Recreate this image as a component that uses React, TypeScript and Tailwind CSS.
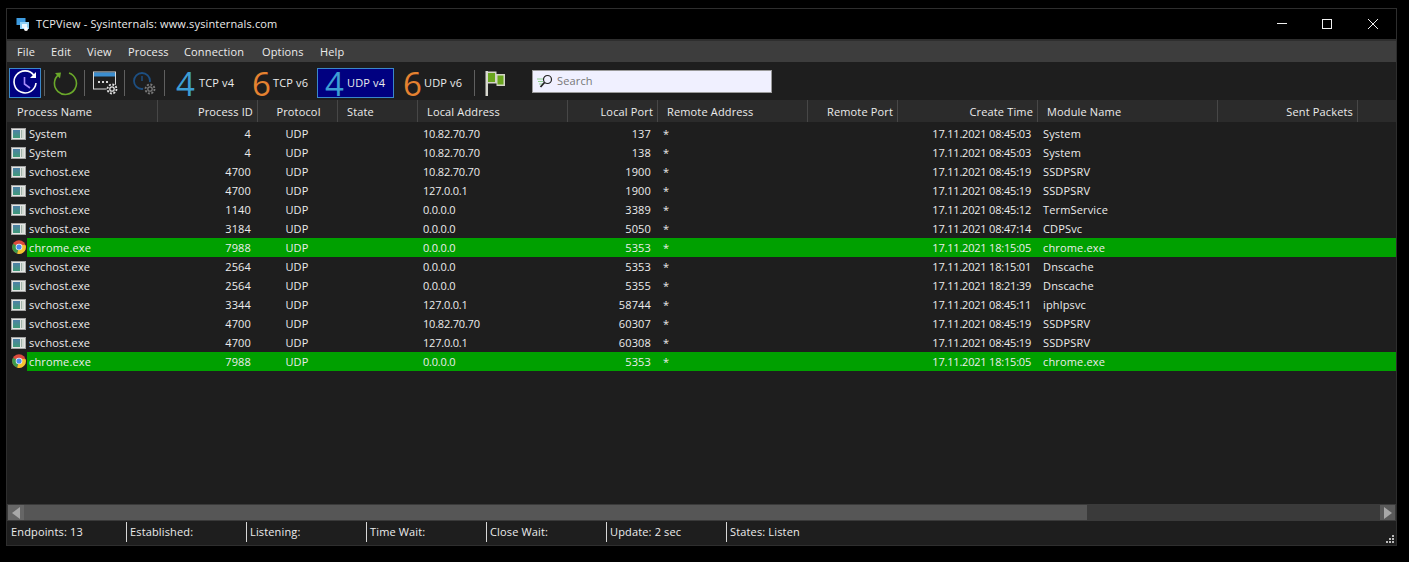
const COLS = [
  { label: "Process Name", w: "w-[150px]", head: "pl-[9px] text-left", cell: "pl-[22px] text-left" },
  { label: "Process ID", w: "w-[100px]", head: "pr-[4px] text-right", cell: "pr-[6px] text-right" },
  { label: "Protocol", w: "w-[80px]", head: "pl-[2px] text-center", cell: "text-center" },
  { label: "State", w: "w-[80px]", head: "pl-[9px] text-left", cell: "pl-[6px] text-left" },
  { label: "Local Address", w: "w-[150px]", head: "pl-[9px] text-left", cell: "pl-[6px] text-left tracking-[-0.2px]" },
  { label: "Local Port", w: "w-[90px]", head: "pr-[4px] text-right", cell: "pr-[6px] text-right" },
  { label: "Remote Address", w: "w-[150px]", head: "pl-[9px] text-left", cell: "pl-[6px] text-left" },
  { label: "Remote Port", w: "w-[90px]", head: "pr-[4px] text-right", cell: "pr-[6px] text-right" },
  { label: "Create Time", w: "w-[140px]", head: "pr-[4px] text-right", cell: "pr-[6px] text-right tracking-[-0.2px]" },
  { label: "Module Name", w: "w-[180px]", head: "pl-[9px] text-left", cell: "pl-[6px] text-left" },
  { label: "Sent Packets", w: "w-[140px]", head: "pr-[4px] text-right", cell: "pr-[6px] text-right" },
];

const ROWS = [
  ["System", "4", "10.82.70.70", "137", "17.11.2021 08:45:03", "System"],
  ["System", "4", "10.82.70.70", "138", "17.11.2021 08:45:03", "System"],
  ["svchost.exe", "4700", "10.82.70.70", "1900", "17.11.2021 08:45:19", "SSDPSRV"],
  ["svchost.exe", "4700", "127.0.0.1", "1900", "17.11.2021 08:45:19", "SSDPSRV"],
  ["svchost.exe", "1140", "0.0.0.0", "3389", "17.11.2021 08:45:12", "TermService"],
  ["svchost.exe", "3184", "0.0.0.0", "5050", "17.11.2021 08:47:14", "CDPSvc"],
  ["chrome.exe", "7988", "0.0.0.0", "5353", "17.11.2021 18:15:05", "chrome.exe"],
  ["svchost.exe", "2564", "0.0.0.0", "5353", "17.11.2021 18:15:01", "Dnscache"],
  ["svchost.exe", "2564", "0.0.0.0", "5355", "17.11.2021 18:21:39", "Dnscache"],
  ["svchost.exe", "3344", "127.0.0.1", "58744", "17.11.2021 08:45:11", "iphlpsvc"],
  ["svchost.exe", "4700", "10.82.70.70", "60307", "17.11.2021 08:45:19", "SSDPSRV"],
  ["svchost.exe", "4700", "127.0.0.1", "60308", "17.11.2021 08:45:19", "SSDPSRV"],
  ["chrome.exe", "7988", "0.0.0.0", "5353", "17.11.2021 18:15:05", "chrome.exe"],
];

const MENU = [
  { label: "File", w: "w-[34px]" },
  { label: "Edit", w: "w-[36px]" },
  { label: "View", w: "w-[41px]" },
  { label: "Process", w: "w-[56px]" },
  { label: "Connection", w: "w-[78px]" },
  { label: "Options", w: "w-[58px]" },
  { label: "Help", w: "w-[40px]" },
];

const STATUS = ["Endpoints: 13", "Established:", "Listening:", "Time Wait:", "Close Wait:", "Update: 2 sec"];

function AppIcon() {
  return (
    <svg width="15" height="12" viewBox="0 0 15 12" className="shrink-0">
      <defs>
        <linearGradient id="appfill" x1="0" y1="0" x2="0" y2="1">
          <stop offset="0" stopColor="#4f7fa8" />
          <stop offset="1" stopColor="#3f9a78" />
        </linearGradient>
      </defs>
      <rect x="0.5" y="0.5" width="14" height="11" fill="#e4e6e4" stroke="#a4a4a4" />
      <rect x="2" y="2" width="7" height="8" fill="url(#appfill)" />
      <rect x="10" y="2" width="1" height="8" fill="#9fb2a8" />
      <rect x="11" y="2" width="2" height="8" fill="#d2d8d2" />
    </svg>
  );
}

function ChromeIcon() {
  return (
    <svg width="14" height="14" viewBox="0 0 16 16" className="shrink-0">
      <circle cx="8" cy="8" r="7.8" fill="#dd4b3e" />
      <path d="M8 8 L1.2 4.2 A7.8 7.8 0 0 0 6 15.6 Z" fill="#3b9a4b" />
      <path d="M8 8 L6 15.6 A7.8 7.8 0 0 0 15.6 6 L8 5 Z" fill="#f4c430" />
      <circle cx="8" cy="8" r="3.8" fill="#f2f2f2" />
      <circle cx="8" cy="8" r="2.9" fill="#4a8af0" />
    </svg>
  );
}

function TitleIcon() {
  return (
    <svg width="15" height="15" viewBox="0 0 15 15" className="shrink-0">
      <rect x="0.500" y="1" width="9" height="7" fill="#3d9be0" />
      <rect x="4" y="5" width="9" height="7" fill="#8fd0f5" />
      <rect x="6" y="7" width="5" height="4" fill="#e9f6ff" />
      <circle cx="10" cy="12" r="2" fill="#ffffff" />
    </svg>
  );
}

function WindowButtons() {
  return (
    <svg width="101" height="10" viewBox="0 0 101 10" fill="none" className="mr-[18px] shrink-0" stroke="#f0f0f0">
      <path d="M0 4.500 H10" />
      <rect x="45.500" y="0.500" width="9" height="9" />
      <path d="M91 0 L101 10 M101 0 L91 10" />
    </svg>
  );
}

function ClockRefresh() {
  return (
    <svg width="30" height="28" viewBox="0 0 30 28" fill="none">
      <path d="M24 6.500 A11 11 0 1 0 26 14" stroke="#ffffff" strokeWidth="1.6" />
      <path d="M26 3 V9 H20" fill="#ffffff" />
      <path d="M14.500 8 V15 L20 19" stroke="#a78bfa" strokeWidth="1.6" />
    </svg>
  );
}

function RefreshGreen() {
  return (
    <svg width="26" height="26" viewBox="0 0 26 26" fill="none">
      <path d="M7 4.500 A11 11 0 1 0 17 3" stroke="#6aa82a" strokeWidth="1.600" />
      <path d="M3 3 L9 2.500 L8 8.500 Z" fill="#6aa82a" />
    </svg>
  );
}

function Gear({ x, y, color }: { x: number; y: number; color: string }) {
  return (
    <g transform={`translate(${x} ${y})`} stroke={color} fill="none">
      <circle r="2.2" strokeWidth="1.3" />
      <circle r="4.5" strokeWidth="1.8" strokeDasharray="2 1.5" />
    </g>
  );
}

function WindowGear() {
  return (
    <svg width="25" height="24" viewBox="0 0 25 24" fill="none">
      <rect x="0.500" y="1" width="22" height="17" fill="#1f1f1f" stroke="#d8d8d8" />
      <rect x="1" y="1.500" width="21" height="4" fill="#3b8ed0" />
      <path d="M5 11h2M9 11h2M13 11h2" stroke="#d8d8d8" strokeWidth="2" />
      <circle cx="19" cy="18" r="5.500" fill="#1f1f1f" />
      <Gear x={19} y={18} color="#e0e0e0" />
    </svg>
  );
}

function ClockGear() {
  return (
    <svg width="25" height="27" viewBox="0 0 25 27" fill="none">
      <circle cx="9" cy="11" r="8" stroke="#1d4f82" strokeWidth="1.8" />
      <path d="M9 6 V11" stroke="#1d4f82" strokeWidth="1.4" />
      <circle cx="17" cy="19" r="7" fill="#1f1f1f" />
      <Gear x={17} y={19} color="#7a7a7a" />
    </svg>
  );
}

function Flag() {
  return (
    <svg width="20" height="25" viewBox="0 0 20 25">
      <path d="M0.500 0 H3 V25 H0.500 Z" fill="#d8d8d0" />
      <path d="M3 0.500 H11.500 V3 H20 V15 H11.500 V12.500 H3 Z" fill="#d4d4c8" />
      <rect x="3" y="2" width="7" height="9" fill="#6aa51e" />
      <rect x="12.500" y="4.500" width="6" height="9" fill="#6aa51e" />
    </svg>
  );
}

function SearchGlyph() {
  return (
    <svg width="20" height="15" viewBox="0 0 20 15" fill="none" className="shrink-0">
      <path d="M1 5h6M2 7.500h5M3 10h4" stroke="#8fd08f" strokeWidth="1" />
      <circle cx="11.500" cy="5.500" r="4" stroke="#222222" strokeWidth="1.200" />
      <path d="M8.500 8.500 L4.500 13" stroke="#222222" strokeWidth="1.800" />
    </svg>
  );
}

function Sep() {
  return <div className="mx-[3px] h-[26px] w-[1px] shrink-0 bg-[#5f5f5f]" />;
}

function Digit({ v }: { v: "4" | "6" }) {
  return (
    <span
      className={
        v === "4"
          ? "w-[18px] pt-[2px] text-center text-[33px] leading-[28px] tracking-normal text-[#3d9ed4]"
          : "w-[18px] pt-[2px] text-center text-[33px] leading-[28px] tracking-normal text-[#e58230]"
      }
    >
      {v}
    </span>
  );
}

export default function App() {
  return (
    <div className="h-[562px] w-[1409px] overflow-hidden bg-black pt-[8px] pl-[6px] font-['Open_Sans',sans-serif] text-[11px] tracking-[0.15px] text-[#ececec]">
      <div className="flex h-[538px] w-[1391px] flex-col border border-[#2e2e2e] bg-[#1e1e1e]">
        {/* title bar */}
        <div className="flex h-[32px] shrink-0 items-center border-b-2 border-[#2e2e2e] bg-black pl-[9px]">
          <TitleIcon />
          <span className="ml-[5px] flex-1">TCPView - Sysinternals: www.sysinternals.com</span>
          <WindowButtons />
        </div>
        {/* menu */}
        <div className="flex h-[21px] shrink-0 items-center bg-[#3d3d3d] pt-[2px] pl-[10px]">
          {MENU.map((m) => (
            <span key={m.label} className={`${m.w} shrink-0`}>
              {m.label}
            </span>
          ))}
        </div>
        {/* toolbar */}
        <div className="flex h-[38px] shrink-0 items-center pt-[4px] pl-[2px]">
          <div className="flex h-[30px] w-[32px] items-center justify-center border border-[#3a87c8] bg-[#000080]">
            <ClockRefresh />
          </div>
          <Sep />
          <div className="mr-[3px] ml-[4px] flex w-[26px] justify-center">
            <RefreshGreen />
          </div>
          <Sep />
          <div className="mr-[3px] ml-[5px] flex w-[25px] justify-center">
            <WindowGear />
          </div>
          <Sep />
          <div className="mr-[3px] ml-[5px] flex w-[25px] justify-center">
            <ClockGear />
          </div>
          <Sep />
          <div className="ml-[8px] flex w-[76px] items-center gap-[5px]">
            <Digit v="4" />
            <span>TCP v4</span>
          </div>
          <div className="flex w-[65px] items-center gap-[3px]">
            <Digit v="6" />
            <span>TCP v6</span>
          </div>
          <div className="flex h-[30px] w-[77px] items-center gap-[4px] border border-[#3a87c8] bg-[#000080] pl-[7px]">
            <Digit v="4" />
            <span>UDP v4</span>
          </div>
          <div className="ml-[9px] flex w-[68px] items-center gap-[3px]">
            <Digit v="6" />
            <span>UDP v6</span>
          </div>
          <Sep />
          <div className="ml-[7px]">
            <Flag />
          </div>
          <div className="mb-[4px] ml-[27px] flex h-[23px] w-[240px] items-center gap-[1px] border border-[#9a9a9a] bg-[#f0f0ff] pl-[3px] text-[#777777]">
            <SearchGlyph />
            <span>Search</span>
          </div>
        </div>
        {/* header */}
        <div className="flex h-[22px] shrink-0 items-center bg-[#2b2b2b] pl-[1px]">
          {COLS.map((c) => (
            <div key={c.label} className={`${c.w} ${c.head} h-full shrink-0 border-r border-[#474747] leading-[24px]`}>
              {c.label}
            </div>
          ))}
        </div>
        {/* rows */}
        <div className="flex-1 overflow-hidden pt-[2px]">
          {ROWS.map((r, i) => {
            const chrome = r[0] === "chrome.exe";
            return (
              <div key={i} className="relative flex h-[19px] items-center">
                {chrome ? (
                  <div className="absolute top-[2px] left-[5px]">
                    <ChromeIcon />
                  </div>
                ) : (
                  <div className="absolute top-[4px] left-[4px]">
                    <AppIcon />
                  </div>
                )}
                <div className={chrome ? "ml-[20px] flex h-full flex-1 items-center bg-[#00a000] pt-[2px]" : "ml-[20px] flex h-full flex-1 items-center pt-[2px]"}>
                  <div className="w-[130px] shrink-0 pl-[2px]">{r[0]}</div>
                  <div className={`${COLS[1].w} ${COLS[1].cell} shrink-0`}>{r[1]}</div>
                  <div className={`${COLS[2].w} ${COLS[2].cell} shrink-0`}>UDP</div>
                  <div className={`${COLS[3].w} shrink-0`} />
                  <div className={`${COLS[4].w} ${COLS[4].cell} shrink-0`}>{r[2]}</div>
                  <div className={`${COLS[5].w} ${COLS[5].cell} shrink-0`}>{r[3]}</div>
                  <div className={`${COLS[6].w} ${COLS[6].cell} shrink-0`}>*</div>
                  <div className={`${COLS[7].w} shrink-0`} />
                  <div className={`${COLS[8].w} ${COLS[8].cell} shrink-0`}>{r[4]}</div>
                  <div className={`${COLS[9].w} ${COLS[9].cell} shrink-0`}>{r[5]}</div>
                </div>
              </div>
            );
          })}
        </div>
        {/* scrollbar */}
        <div className="flex h-[17px] shrink-0 items-center bg-[#3a3a3a] px-[1px]">
          <div className="flex h-[15px] w-[16px] shrink-0 items-center justify-center bg-[#666666]">
            <div className="h-0 w-0 border-y-[6px] border-r-[8px] border-y-transparent border-r-[#a8a8a8]" />
          </div>
          <div className="h-[15px] w-[1063px] shrink-0 bg-[#565656]" />
          <div className="flex-1" />
          <div className="flex h-[15px] w-[15px] shrink-0 items-center justify-center bg-[#5a5a5a]">
            <div className="h-0 w-0 border-y-[6px] border-l-[8px] border-y-transparent border-l-[#a8a8a8]" />
          </div>
        </div>
        {/* status */}
        <div className="relative flex h-[24px] shrink-0 items-center pb-[2px] pl-[4px]">
          {STATUS.map((s, i) => (
            <div
              key={s}
              className={
                i === 0
                  ? "flex h-[20px] w-[116px] shrink-0 items-center border-r border-[#d8d8d8]"
                  : "flex h-[20px] w-[120px] shrink-0 items-center border-r border-[#d8d8d8] pl-[3px]"
              }
            >
              {s}
            </div>
          ))}
          <div className="pl-[3px]">States: Listen</div>
          <div className="absolute right-[2px] bottom-[2px] grid grid-cols-3 gap-[1px]">
            <span className="h-[2px] w-[2px]" />
            <span className="h-[2px] w-[2px]" />
            <span className="h-[2px] w-[2px] bg-[#bbbbbb]" />
            <span className="h-[2px] w-[2px]" />
            <span className="h-[2px] w-[2px] bg-[#bbbbbb]" />
            <span className="h-[2px] w-[2px] bg-[#bbbbbb]" />
            <span className="h-[2px] w-[2px] bg-[#bbbbbb]" />
            <span className="h-[2px] w-[2px] bg-[#bbbbbb]" />
            <span className="h-[2px] w-[2px] bg-[#bbbbbb]" />
          </div>
        </div>
      </div>
    </div>
  );
}
